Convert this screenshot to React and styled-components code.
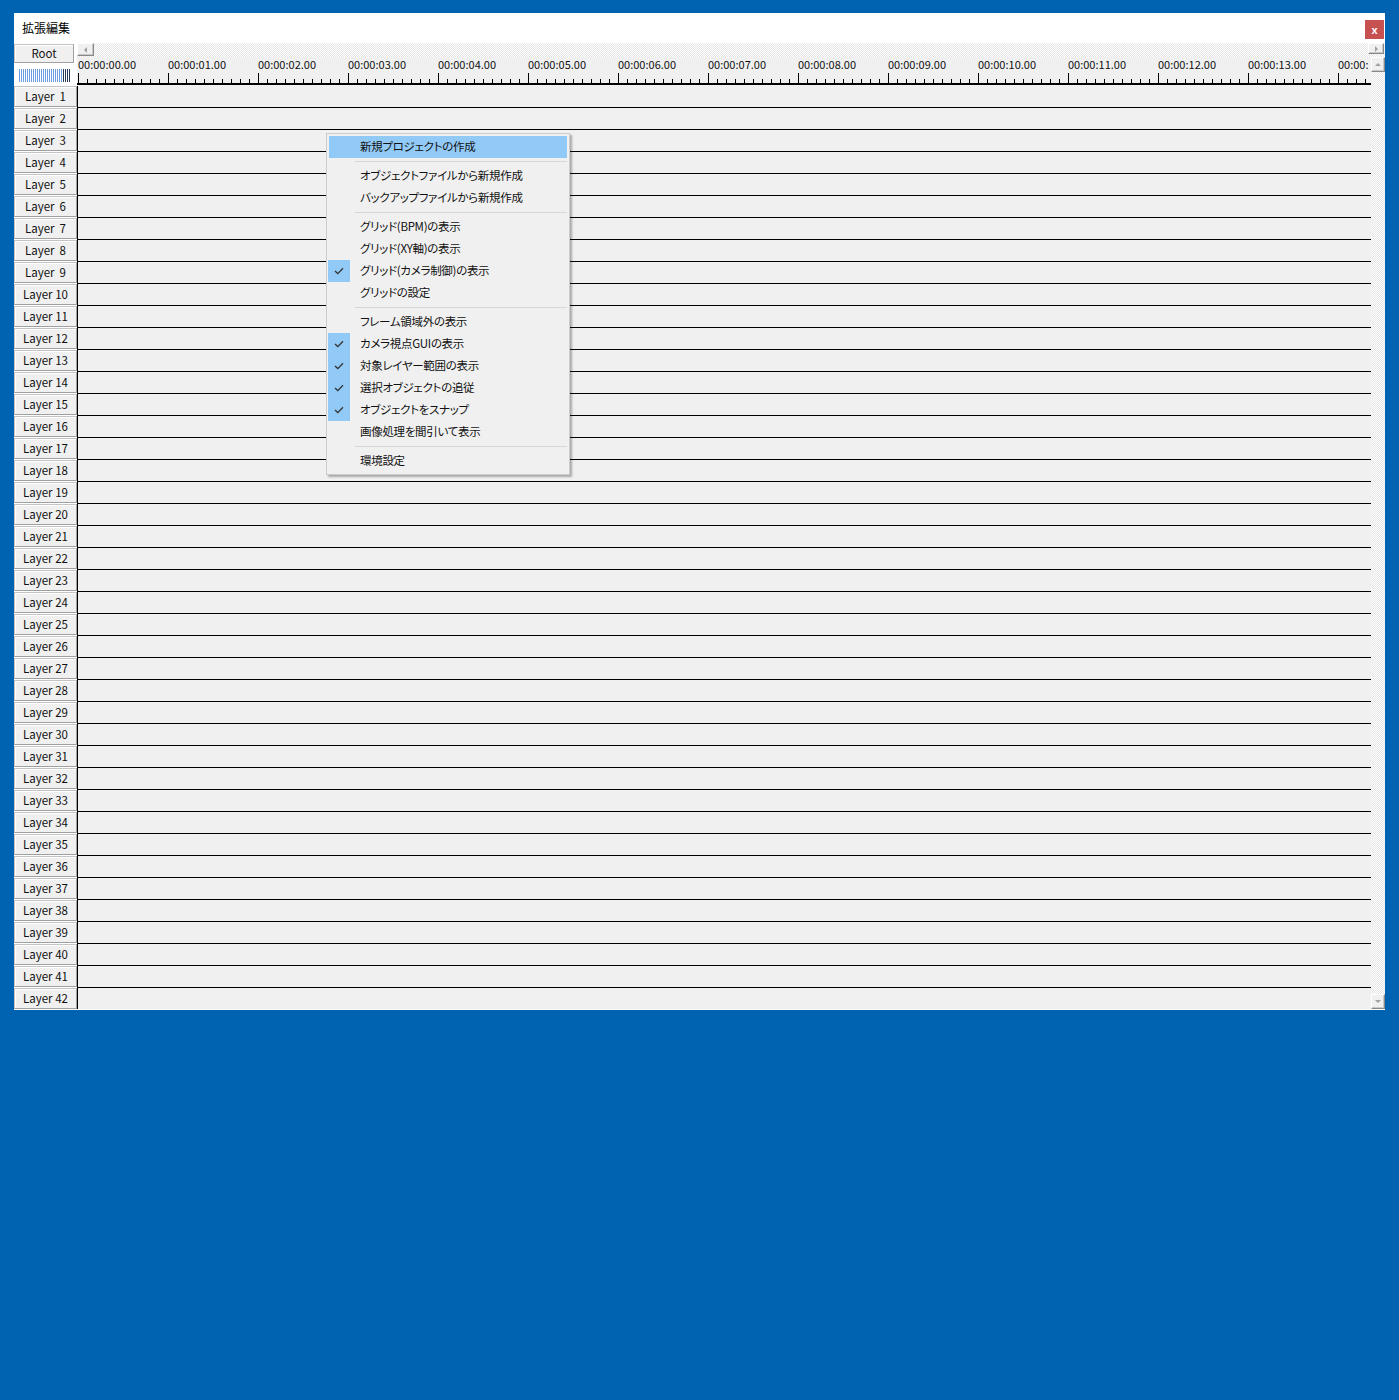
import React from "react";
import styled, { createGlobalStyle } from "styled-components";

const GlobalStyle = createGlobalStyle`
  html, body { margin: 0; padding: 0; background: #0063b1; }
  body {
    font-family: "Noto Sans CJK JP", "Noto Sans", sans-serif;
    font-size: 12px;
    color: #000;
  }
`;

const hatch = `
  background-color: #fff;
  background-image: repeating-conic-gradient(#e6e6e6 0 25%, #fff 0 50%);
  background-size: 2px 2px;
`;

const Desktop = styled.div`
  position: relative;
  min-height: 1400px;
  padding: 13px 0 0 14px;
  box-sizing: border-box;
`;

const Window = styled.div`
  width: 1371px;
  background: #fff;
  display: flex;
  flex-direction: column;
`;

const TitleBar = styled.div`
  height: 30px;
  display: flex;
  align-items: center;
  justify-content: space-between;
  padding: 0 1px 0 8px;
`;

const Title = styled.span`
  font-size: 12px;
  line-height: 14px;
  margin-top: -1px;
`;

const CloseButton = styled.div`
  width: 19px;
  height: 19px;
  margin-top: 3px;
  background: #c75050;
  color: #fff;
  font: bold 11px "Liberation Sans", sans-serif;
  display: flex;
  align-items: center;
  justify-content: center;
`;

const Body = styled.div`
  display: flex;
`;

const LayerColumn = styled.div`
  width: 63px;
  flex-shrink: 0;
  display: flex;
  flex-direction: column;
`;

const PanelButton = styled.div`
  box-sizing: border-box;
  width: ${(p) => p.$w}px;
  height: ${(p) => p.$h}px;
  margin-bottom: 1px;
  background: #f0f0f0;
  border: 1px solid;
  border-color: #c4c4c4 #a0a0a0 #a0a0a0 #c4c4c4;
  box-shadow: inset 1px 1px 0 #fff;
  display: flex;
  align-items: center;
  justify-content: center;
  font-size: 11.5px;
  white-space: pre;
  line-height: 1;
  color: #111;
`;

const RootButton = styled(PanelButton)`
  margin-top: 1px;
  margin-bottom: 0;
`;

const MeterSlot = styled.div`
  height: 23px;
  box-sizing: border-box;
  padding: 6px 0 0 5px;
`;

const Meter = styled.div`
  display: flex;
  width: 52px;
  height: 13px;
`;

const MeterLevel = styled.div`
  flex: 1;
  background: repeating-linear-gradient(to right, #6a9ce3 0 1px, #fff 1px 2px);
`;

const MeterPeak = styled.div`
  width: 8px;
  background: repeating-linear-gradient(to right, #26375c 0 1px, #fff 1px 2px);
`;

const Timeline = styled.div`
  flex: 1;
  min-width: 0;
  display: flex;
  flex-direction: column;
`;

const HScroll = styled.div`
  height: 14px;
  display: flex;
  justify-content: space-between;
  align-items: flex-start;
  ${hatch}
`;

const ArrowButton = styled.div`
  box-sizing: border-box;
  width: ${(p) => p.$w}px;
  height: ${(p) => p.$h}px;
  margin-right: ${(p) => p.$mr || 0}px;
  background: #f0f0f0;
  border: 1px solid;
  border-color: #fff #888 #888 #fff;
  box-shadow: inset -1px -1px 0 #c8c8c8;
  display: flex;
  align-items: center;
  justify-content: center;
`;

const Arrow = styled.span`
  width: 0;
  height: 0;
  border: 3px solid transparent;
  ${(p) => p.$dir === "left" && "border-right: 3px solid #a0a0a0; border-left-width: 0;"}
  ${(p) => p.$dir === "right" && "border-left: 3px solid #a0a0a0; border-right-width: 0;"}
  ${(p) => p.$dir === "up" && "border-bottom: 3px solid #a0a0a0; border-top-width: 0;"}
  ${(p) => p.$dir === "down" && "border-top: 3px solid #a0a0a0; border-bottom-width: 0;"}
`;

const TimelineBody = styled.div`
  display: flex;
`;

const Tracks = styled.div`
  width: 1294px;
  flex-shrink: 0;
  display: flex;
  flex-direction: column;
  overflow: hidden;
`;

const Ruler = styled.div`
  height: 29px;
  background: #f0f0f0;
  display: flex;
  flex-direction: column;
  overflow: hidden;
`;

const RulerLabels = styled.div`
  display: flex;
  height: 15px;
  padding-left: 1px;
`;

const RulerLabel = styled.span`
  flex: 0 0 ${(p) => p.$w || 90}px;
  font-size: 11px;
  line-height: 15px;
  white-space: nowrap;
  overflow: hidden;
  color: #111;
`;

const TrackRow = styled.div`
  height: 22px;
  box-sizing: border-box;
  background: #f0f0f0;
  border-left: 1px solid #000;
  border-bottom: 1px solid #000;

  &:last-child {
    height: 21px;
    border-bottom: none;
  }
`;

const VScroll = styled.div`
  width: 14px;
  display: flex;
  flex-direction: column;
  justify-content: space-between;
  ${hatch}
`;

const ContextMenu = styled.div`
  position: absolute;
  left: 326px;
  top: 133px;
  width: 244px;
  box-sizing: border-box;
  padding: 2px;
  background: #f0f0f0;
  border: 1px solid #cccccc;
  box-shadow: 2px 2px 2px rgba(0, 0, 0, 0.3);
  font-size: 11.5px;
  letter-spacing: -0.3px;
  font-feature-settings: "palt";
`;

const MenuItem = styled.div`
  position: relative;
  height: 22px;
  box-sizing: border-box;
  padding: 0 0 2px 31px;
  display: flex;
  align-items: center;
  background: ${(p) => (p.$active ? "#91c9f7" : "transparent")};
  white-space: nowrap;
  color: #111;
`;

const CheckBox = styled.span`
  position: absolute;
  left: -1px;
  top: 0;
  width: 22px;
  height: 22px;
  background: #91c9f7;
  display: flex;
  align-items: center;
  justify-content: center;
`;

const Separator = styled.div`
  height: 7px;
  display: flex;
  align-items: center;
  padding-left: 26px;

  &::after {
    content: "";
    flex: 1;
    height: 1px;
    background: #d7d7d7;
  }
`;

const menu = [
  { label: "新規プロジェクトの作成", active: true },
  "-",
  { label: "オブジェクトファイルから新規作成" },
  { label: "バックアップファイルから新規作成" },
  "-",
  { label: "グリッド(BPM)の表示" },
  { label: "グリッド(XY軸)の表示" },
  { label: "グリッド(カメラ制御)の表示", checked: true },
  { label: "グリッドの設定" },
  "-",
  { label: "フレーム領域外の表示" },
  { label: "カメラ視点GUIの表示", checked: true },
  { label: "対象レイヤー範囲の表示", checked: true },
  { label: "選択オブジェクトの追従", checked: true },
  { label: "オブジェクトをスナップ", checked: true },
  { label: "画像処理を間引いて表示" },
  "-",
  { label: "環境設定" },
];

const layers = Array.from({ length: 42 }, (_, i) => i + 1);
const seconds = Array.from({ length: 14 }, (_, i) => `00:00:${String(i).padStart(2, "0")}.00`);

const Check = () => (
  <svg width="10" height="8" viewBox="0 0 10 8">
    <path d="M1 4 L3.8 6.6 L9 1.2" fill="none" stroke="#333" strokeWidth="1.3" />
  </svg>
);

const Ticks = () => {
  const ticks = [];
  for (let i = 0; i < 144; i++) {
    const x = 1.5 + i * 9;
    ticks.push(<line key={i} x1={x} x2={x} y1={i % 10 === 0 ? 1 : 7} y2={11} stroke="#000" strokeWidth="1" />);
  }
  return (
    <svg width="1294" height="14" style={{ display: "block" }}>
      {ticks}
      <rect x="0" y="11" width="1294" height="2" fill="#000" />
    </svg>
  );
};

export default function App() {
  return (
    <>
      <GlobalStyle />
      <Desktop>
        <Window>
          <TitleBar>
            <Title>拡張編集</Title>
            <CloseButton>x</CloseButton>
          </TitleBar>
          <Body>
            <LayerColumn>
              <RootButton $w={60} $h={19}>Root</RootButton>
              <MeterSlot>
                <Meter>
                  <MeterLevel />
                  <MeterPeak />
                </Meter>
              </MeterSlot>
              {layers.map((n) => (
                <PanelButton key={n} $w={63} $h={21}>
                  {n < 10 ? `Layer  ${n}` : `Layer ${n}`}
                </PanelButton>
              ))}
            </LayerColumn>
            <Timeline>
              <HScroll>
                <ArrowButton $w={17} $h={13}>
                  <Arrow $dir="left" />
                </ArrowButton>
                <ArrowButton $w={16} $h={11} $mr={1}>
                  <Arrow $dir="right" />
                </ArrowButton>
              </HScroll>
              <TimelineBody>
                <Tracks>
                  <Ruler>
                    <RulerLabels>
                      {seconds.map((s) => (
                        <RulerLabel key={s}>{s}</RulerLabel>
                      ))}
                      <RulerLabel $w={30}>00:00:</RulerLabel>
                    </RulerLabels>
                    <Ticks />
                  </Ruler>
                  {layers.map((n) => (
                    <TrackRow key={n} />
                  ))}
                </Tracks>
                <VScroll>
                  <ArrowButton $w={14} $h={15}>
                    <Arrow $dir="up" />
                  </ArrowButton>
                  <ArrowButton $w={14} $h={15}>
                    <Arrow $dir="down" />
                  </ArrowButton>
                </VScroll>
              </TimelineBody>
            </Timeline>
          </Body>
        </Window>
        <ContextMenu>
          {menu.map((item, i) =>
            item === "-" ? (
              <Separator key={i} />
            ) : (
              <MenuItem key={i} $active={item.active}>
                {item.checked && (
                  <CheckBox>
                    <Check />
                  </CheckBox>
                )}
                {item.label}
              </MenuItem>
            )
          )}
        </ContextMenu>
      </Desktop>
    </>
  );
}
